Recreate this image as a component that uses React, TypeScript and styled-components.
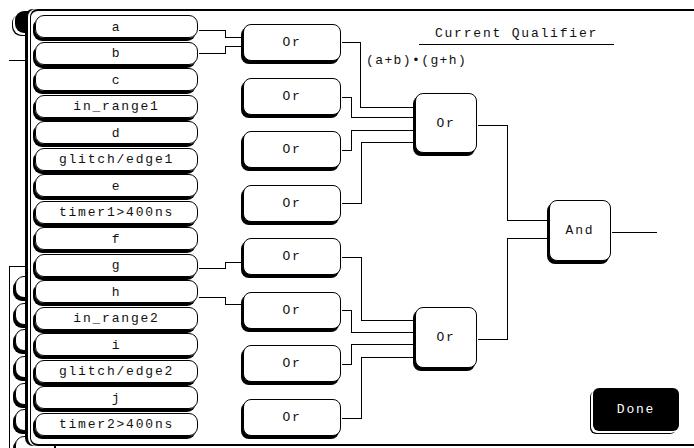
import React from 'react';
import styled, { createGlobalStyle } from 'styled-components';

// canvas origin in page coordinates (right edge of the input column, under the dialog top border)
const OX = 198;
const OY = 11;

const GlobalStyle = createGlobalStyle`
  html, body {
    margin: 0;
    padding: 0;
    background: #fff;
    overflow: hidden;
  }
  body {
    font-family: "Liberation Mono", "DejaVu Sans Mono", monospace;
    font-size: 13px;
    color: #111;
  }
`;

const Screen = styled.div`
  position: relative;
  width: 694px;
  height: 448px;
  overflow: hidden;
  background: #fff;
`;

/* window left behind the dialog */
const BackLayer = styled.div`
  display: flex;
  flex-direction: column;
  height: 100%;
  box-sizing: border-box;
  padding: 11px 0 0 9px;
`;

const TopKey = styled.div`
  flex: none;
  margin-left: 6px;
  width: 30px;
  height: 22px;
  background: #000;
  border-radius: 9px;
  box-shadow: -2px 2px 0 #fff, -3px 3px 0 #000;
`;

const Divider = styled.div`
  flex: none;
  margin-top: 27px;
  width: 20px;
  height: 1px;
  background: #000;
`;

const BackBox = styled.div`
  margin-top: 205px;
  flex: 1;
  min-height: 0;
  overflow: hidden;
  width: 40px;
  border: 1px solid #000;
  border-bottom: none;
  display: flex;
  flex-direction: column;
  gap: 4.7px;
  padding: 9px 0 0 5px;
`;

const BackKey = styled.div`
  flex: none;
  width: 40px;
  height: 22px;
  box-sizing: border-box;
  border: 1px solid #000;
  border-radius: 9px;
  background: #fff;
  box-shadow: -2px 3px 0 #000;
`;

/* qualifier dialog on top */
const Dialog = styled.div`
  position: absolute;
  left: 30px;
  top: 9px;
  width: 664px;
  height: 437px;
  box-sizing: border-box;
  background: #fff;
  border-top: 2px solid #000;
  border-bottom: 2px solid #000;
  border-left: 1px solid #000;
  border-radius: 8px 0 0 8px;
  box-shadow: -2px 0 0 #fff, -5px 0 0 #000;
  display: flex;
`;

const InputColumn = styled.div`
  flex: none;
  display: flex;
  flex-direction: column;
  gap: 3.5px;
  padding: 4px 0 0 4px;
  width: 163px;
`;

const InputKey = styled.div`
  height: 23px;
  box-sizing: border-box;
  border: 1px solid #000;
  border-radius: 9px;
  box-shadow: -2px 3px 0 #000;
  display: flex;
  align-items: center;
  justify-content: center;
  padding-top: 1px;
  letter-spacing: 1.8px;
  white-space: nowrap;
`;

const Canvas = styled.div`
  position: relative;
  flex: 1;
  display: flex;
  flex-direction: column;
  padding: 15px 15px 13px 0;
`;

const Wires = styled.svg`
  position: absolute;
  left: 0;
  top: 0;
  pointer-events: none;
`;

const Gate = styled.div<{ $x: number; $y: number; $w: number; $h: number }>`
  position: absolute;
  left: ${(p) => p.$x - OX}px;
  top: ${(p) => p.$y - OY}px;
  width: ${(p) => p.$w}px;
  height: ${(p) => p.$h}px;
  box-sizing: border-box;
  border: 1px solid #000;
  border-radius: 8px;
  background: #fff;
  box-shadow: -2px 3px 0 #000;
  display: flex;
  align-items: center;
  justify-content: center;
  letter-spacing: 1.8px;
`;

const Legend = styled.div`
  align-self: flex-start;
  margin-left: ${366 - OX}px;
  display: flex;
  flex-direction: column;
  gap: 8px;
`;

const Title = styled.div`
  margin-left: 53px;
  width: 195px;
  line-height: 16px;
  padding-bottom: 2px;
  border-bottom: 1px solid #000;
  text-align: center;
  letter-spacing: 1.8px;
`;

const Expression = styled.div`
  line-height: 16px;
  letter-spacing: 1.4px;
`;

const Spacer = styled.div`
  flex: 1;
`;

const DoneButton = styled.div`
  align-self: flex-end;
  width: 86px;
  height: 43px;
  background: #000;
  color: #fff;
  border-radius: 6px;
  box-shadow: -2px 2px 0 #fff, -3px 3px 0 #000;
  display: flex;
  align-items: center;
  justify-content: center;
  letter-spacing: 1.8px;
`;

const inputs = [
  'a', 'b', 'c', 'in_range1', 'd', 'glitch/edge1', 'e', 'timer1>400ns',
  'f', 'g', 'h', 'in_range2', 'i', 'glitch/edge2', 'j', 'timer2>400ns',
];

const orCenters = [43, 97, 150, 204, 257, 311, 364, 418];

const wirePaths: number[][] = [
  // input pairs to first-level gates
  [198, 30, 225, 30, 225, 37, 243, 37],
  [198, 53, 225, 53, 225, 46, 243, 46],
  [198, 268, 225, 268, 225, 262, 243, 262],
  [198, 297, 225, 297, 225, 304, 243, 304],
  // first level to second level
  [341, 42, 360, 42, 360, 107, 415, 107],
  [341, 97, 351, 97, 351, 117, 415, 117],
  [341, 150, 351, 150, 351, 130, 415, 130],
  [341, 203, 361, 203, 361, 142, 415, 142],
  [341, 257, 361, 257, 361, 320, 415, 320],
  [341, 310, 351, 310, 351, 332, 415, 332],
  [341, 364, 351, 364, 351, 344, 415, 344],
  [341, 418, 361, 418, 361, 357, 415, 357],
  // second level to the And gate
  [477, 125, 507, 125, 507, 220, 549, 220],
  [477, 339, 507, 339, 507, 238, 549, 238],
  [611, 232, 656, 232],
];

const toPoints = (p: number[]) => {
  const out: string[] = [];
  for (let i = 0; i < p.length; i += 2) out.push(`${p[i] + 0.5},${p[i + 1] + 0.5}`);
  return out.join(' ');
};

export default function App() {
  const w = 694 - OX;
  const h = 446 - OY;
  return (
    <>
      <GlobalStyle />
      <Screen>
        <BackLayer>
          <TopKey />
          <Divider />
          <BackBox>
            {Array.from({ length: 7 }).map((_, i) => (
              <BackKey key={i} />
            ))}
          </BackBox>
        </BackLayer>

        <Dialog>
          <InputColumn>
            {inputs.map((t) => (
              <InputKey key={t}>{t}</InputKey>
            ))}
          </InputColumn>
          <Canvas>
            <Wires width={w} height={h} viewBox={`${OX} ${OY} ${w} ${h}`}>
              {wirePaths.map((p, i) => (
                <polyline
                  key={i}
                  points={toPoints(p)}
                  fill="none"
                  stroke="#000"
                  strokeWidth={1}
                  shapeRendering="crispEdges"
                />
              ))}
            </Wires>

            <Legend>
              <Title>Current Qualifier</Title>
              <Expression>(a+b)•(g+h)</Expression>
            </Legend>

            {orCenters.map((c) => (
              <Gate key={c} $x={243} $y={c - 19} $w={98} $h={37}>
                Or
              </Gate>
            ))}
            <Gate $x={415} $y={93} $w={62} $h={60}>Or</Gate>
            <Gate $x={415} $y={307} $w={62} $h={61}>Or</Gate>
            <Gate $x={549} $y={200} $w={62} $h={61}>And</Gate>

            <Spacer />
            <DoneButton>Done</DoneButton>
          </Canvas>
        </Dialog>
      </Screen>
    </>
  );
}
